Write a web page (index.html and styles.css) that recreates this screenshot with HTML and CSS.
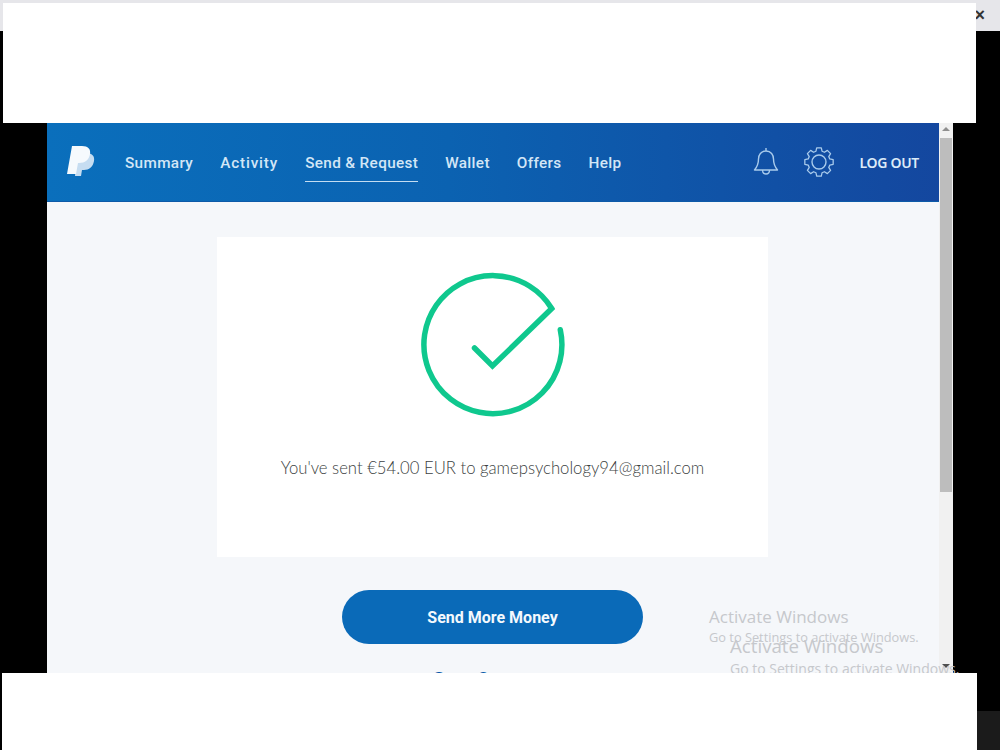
FILE: index.html
```html
<!DOCTYPE html>
<html lang="en">
<head>
    <meta charset="UTF-8">
    <meta name="viewport" content="width=device-width, initial-scale=1.0">
    <title>PayPal - Send &amp; Request</title>
    <link rel="stylesheet" href="styles.css">
</head>
<body>
    <div class="screen">
        <div class="titlebar"><span class="close">&#215;</span></div>

        <div class="window">
            <div class="page">
                <header class="topbar">
                    <svg class="logo" viewBox="0 0 28 32" width="28" height="32">
                        <path fill="#c6ddf1" d="M10 7h9c6 0 9 3 8 8-1 6-5 9-10 9h-2l-1 6H8z"/>
                        <path fill="#f6fafd" d="M5 0h10c6 0 9 3 8 8-1 6-5 9-11 9h-1l-2 11H0z"/>
                    </svg>
                    <nav class="nav">
                        <a>Summary</a>
                        <a class="wide">Activity</a>
                        <a class="active">Send &amp; Request</a>
                        <a>Wallet</a>
                        <a>Offers</a>
                        <a>Help</a>
                    </nav>
                    <div class="tools">
                        <svg class="bell" viewBox="0 0 26 30" width="26" height="30">
                            <path d="M13 1v3M13 4c-5 0-7.500 4-7.500 8 0 5-1.500 8-4 11h23c-2.500-3-4-6-4-11 0-4-2.500-8-7.500-8zM9.500 23c0 2.500 1.500 4 3.500 4s3.500-1.500 3.500-4"/>
                        </svg>
                        <svg class="gear" viewBox="0 0 30 30" width="30" height="30">
                            <path transform="translate(15 15) scale(.92) translate(-15 -16.900)" d="M12.500 1.500h5l.8 3.700 2.600 1.100 3.200-2 3.500 3.500-2 3.200 1.100 2.600 3.700.8v5l-3.700.8-1.100 2.600 2 3.200-3.500 3.500-3.200-2-2.600 1.100-.8 3.700h-5l-.8-3.700-2.600-1.100-3.200 2-3.500-3.500 2-3.200-1.100-2.600-3.700-.8v-5l3.700-.8 1.100-2.600-2-3.200 3.500-3.500 3.200 2 2.600-1.100z"/>
                            <circle cx="15" cy="15" r="7"/>
                        </svg>
                        <a class="logout">LOG OUT</a>
                    </div>
                </header>

                <main class="content">
                    <section class="card">
                        <svg class="check" viewBox="0 0 150 150" width="150" height="150">
                            <path d="M142.300 59.800A69 69 0 1 1 133.700 38.500L74.500 96 56.500 78"/>
                        </svg>
                        <p class="message">You've sent €54.00 EUR to gamepsychology94@gmail.com</p>
                    </section>
                    <button class="primary">Send More Money</button>
                    <a class="more">Go to Summary</a>
                </main>
            </div>
            <div class="scrollbar">
                <span class="arrow up"></span>
                <div class="thumb"></div>
                <span class="arrow down"></span>
            </div>
        </div>

        <div class="watermark first">
            <strong>Activate Windows</strong>
            <span>Go to Settings to activate Windows.</span>
        </div>
        <div class="watermark second">
            <strong>Activate Windows</strong>
            <span>Go to Settings to activate Windows.</span>
        </div>

        <div class="cover cover-top"></div>
        <div class="cover cover-bottom"></div>
        <div class="taskbar"></div>
    </div>
</body>
</html>
```

FILE: styles.css
```css
* { box-sizing: border-box; }
html, body { margin: 0; padding: 0; }
body { width: 1000px; height: 750px; overflow: hidden; background: #000; font-family: "Noto Sans", sans-serif; }

.screen { position: relative; width: 1000px; height: 750px; overflow: hidden; background: #000; }
.titlebar { height: 31px; background: #e6e6ea; display: flex; justify-content: flex-end; align-items: center; padding-right: 15px; }
.close { font-family: "Liberation Sans", sans-serif; font-size: 18px; font-weight: 700; color: #333; }

.window { display: flex; width: 906px; height: 588px; margin: 92px 0 0 47px; }
.page { width: 892px; background: #f5f7fa; overflow: hidden; }

.topbar { height: 79px; display: flex; align-items: center; padding: 0 20px; background: linear-gradient(90deg, #0a6fbc 0%, #0b62b1 45%, #14479f 100%); border-bottom: 1px solid #0d5aa8; }
.logo { flex-shrink: 0; margin-right: 30px; }
.nav { display: flex; gap: 27px; height: 100%; align-items: center; }
.nav a { color: #d3e6f6; font-family: Roboto, sans-serif; font-size: 15.300px; font-weight: 500; letter-spacing: 0.35px; line-height: 20px; padding: 10px 0 8px; border-bottom: 1px solid transparent; }
.nav a.wide { letter-spacing: 0.85px; }
.nav a.active { border-bottom-color: #c4ddf2; }
.tools { margin-left: auto; display: flex; align-items: center; }
.bell, .gear { fill: none; stroke: #a9cbec; stroke-width: 1.400; stroke-linejoin: round; }
.bell { margin-right: 25px; }
.gear { margin-right: 25px; }
.logout { color: #dcebf8; font-size: 14px; font-weight: 600; letter-spacing: -0.3px; }

.content { display: flex; flex-direction: column; align-items: center; padding: 35px 1px 0 0; }
.card { width: 551px; height: 320px; background: #fff; display: flex; flex-direction: column; align-items: center; padding-top: 33px; }
.check { flex-shrink: 0; fill: none; stroke: #0fc88e; stroke-width: 5.500; stroke-linecap: round; stroke-linejoin: miter; }
.message { margin: 36px 0 0; font-family: Lato, sans-serif; font-size: 16.700px; font-weight: 300; line-height: 24px; color: #3c3f42; white-space: nowrap; }
.primary { width: 301px; height: 54px; margin-top: 33px; border: none; border-radius: 27px; background: #0a6ab8; color: #f4f9fd; font-family: Roboto, sans-serif; font-size: 16px; font-weight: 700; }
.more { margin-top: 22px; color: #0a5aa8; font-size: 16px; line-height: 24px; font-weight: 600; }

.scrollbar { width: 14px; height: 100%; background: #f1f1f1; display: flex; flex-direction: column; align-items: center; padding-top: 4px; }
.thumb { width: 12px; height: 354px; margin-top: 7px; background: #bdbdbd; }
.arrow { width: 0; height: 0; border-left: 4px solid transparent; border-right: 4px solid transparent; }
.arrow.up { border-bottom: 4px solid #8f8f8f; }
.arrow.down { border-top: 4px solid #505050; margin-top: 172px; }

/* things lying over the window */
.watermark { position: absolute; font-family: "Open Sans", sans-serif; color: #c6c8cc; white-space: nowrap; }
.watermark strong { display: block; font-weight: 400; }
.watermark.first { left: 709px; top: 605px; }
.watermark.first strong { font-size: 17px; line-height: 23px; }
.watermark.first span { font-size: 12.800px; line-height: 16px; display: block; margin-top: 1px; }
.watermark.second { left: 730px; top: 633px; }
.watermark.second strong { font-size: 18.700px; line-height: 25px; }
.watermark.second span { font-size: 14px; line-height: 20px; display: block; margin-top: 1px; }

.cover { position: absolute; background: #fff; }
.cover-top { left: 3px; top: 3px; width: 973px; height: 120px; }
.cover-bottom { left: 2px; top: 673px; width: 975px; height: 77px; }
.taskbar { position: absolute; left: 977px; top: 711px; width: 23px; height: 39px; background: #1b1b1b; }
```
